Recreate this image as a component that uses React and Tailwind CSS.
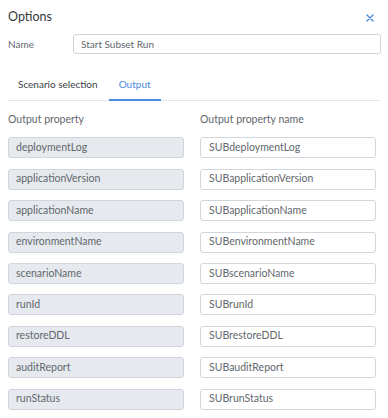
import React from "react";

const rows = [
  "deploymentLog",
  "applicationVersion",
  "applicationName",
  "environmentName",
  "scenarioName",
  "runId",
  "restoreDDL",
  "auditReport",
  "runStatus",
];

export default function App() {
  return (
    <div
      className="w-[388px] h-[418px] bg-white overflow-hidden text-[#62676d]"
      style={{ fontFamily: "Lato, 'Open Sans', sans-serif" }}
    >
      <div className="flex items-center justify-between pl-[8px] pr-[14px] pt-[7px] h-[27px]">
        <span className="text-[12.5px] text-[#34383c] leading-none">Options</span>
        <svg width="8" height="8" viewBox="0 0 8 8" className="mt-[2px]">
          <path d="M1 1L7 7M7 1L1 7" stroke="#4a8ae0" strokeWidth="1.4" strokeLinecap="round" />
        </svg>
      </div>
      <div className="flex items-center pl-[8px] pr-[7px] mt-[7px]">
        <span className="w-[65px] text-[10px]">Name</span>
        <div className="flex-1 h-[20px] border border-[#cfd4d9] rounded-[3px] flex items-center px-[7px] text-[10px] text-[#62676d]">
          Start Subset Run
        </div>
      </div>
      <div className="mx-[8px] mt-[15px] flex border-b border-[#e3e6ea] h-[32px]">
        <div className="px-[10px] flex items-center text-[10px] text-[#3a3f44]">Scenario selection</div>
        <div className="ml-[1px] w-[52px] flex items-center justify-center text-[10px] text-[#4a8ae0] border-b-2 border-[#4a8ae0] -mb-[1px]">
          Output
        </div>
      </div>
      <div className="pl-[8px] pr-[12px] mt-[12px] grid grid-cols-2 gap-x-[16px] gap-y-[10.4px] text-[10.5px]">
        <div className="h-[14px] flex items-center">Output property</div>
        <div className="h-[14px] flex items-center">Output property name</div>
        {rows.map((r) => (
          <React.Fragment key={r}>
            <div className="h-[21px] rounded-[3px] bg-[#e6eaee] border border-[#d0d6dc] flex items-center px-[7px]">
              {r}
            </div>
            <div className="h-[21px] rounded-[3px] bg-white border border-[#d0d6dc] flex items-center px-[8px]">
              SUB{r}
            </div>
          </React.Fragment>
        ))}
      </div>
    </div>
  );
}
